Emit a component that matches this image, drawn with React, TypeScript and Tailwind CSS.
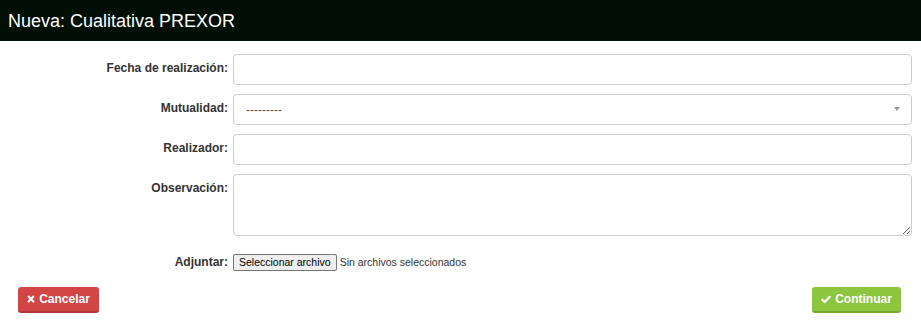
/**
 * Nueva Cualitativa PREXOR
 * Modal-like form for a new qualitative PREXOR record.
 */
import React from "react";

const labelCls =
  "text-right pt-[6px] pr-[5px] text-[12px] leading-[17px] font-bold text-[#333]";
const inputCls =
  "w-full h-[31px] border border-[#ccc] rounded-[4px] bg-white px-3 text-[12px] text-[#555] outline-none";

export default function App() {
  return (
    <div className="w-[921px] h-[327px] bg-white font-['Liberation_Sans',Arial,sans-serif]">
      <div className="h-[41px] bg-[#020f07] flex items-center px-[8px]">
        <h1 className="text-white text-[18px] leading-none">Nueva: Cualitativa PREXOR</h1>
      </div>

      <form className="pt-[13px] pr-[9px]">
        <div className="grid grid-cols-[233px_1fr] gap-y-[9px]">
          <label className={labelCls}>Fecha de realización:</label>
          <input type="text" className={inputCls} />

          <label className={labelCls}>Mutualidad:</label>
          <div className="relative">
            <div className={inputCls + " flex items-center"}>---------</div>
            <span className="absolute right-[12px] top-[13px] w-0 h-0 border-l-[3px] border-r-[3px] border-t-[4px] border-l-transparent border-r-transparent border-t-[#999]" />
          </div>

          <label className={labelCls}>Realizador:</label>
          <input type="text" className={inputCls} />

          <label className={labelCls}>Observación:</label>
          <textarea className="w-full h-[62px] border border-[#ccc] rounded-[4px] bg-white px-3 py-1 text-[12px] text-[#555] outline-none block" />
        </div>

        <div className="grid grid-cols-[233px_1fr] mt-[18px]">
          <label className="text-right pr-[5px] text-[12px] leading-[17px] font-bold text-[#333]">Adjuntar:</label>
          <div className="flex items-center gap-[3px] text-[10.5px]">
            <span className="h-[17px] px-[5px] flex items-center border border-[#767676] rounded-[2px] bg-[#efefef] text-black">
              Seleccionar archivo
            </span>
            <span className="text-[#333]">Sin archivos seleccionados</span>
          </div>
        </div>

        <div className="flex justify-between mt-[16px] pl-[18px] pr-[11px]">
          <button
            type="button"
            className="h-[26px] w-[81px] rounded-[3px] bg-[#d24545] border-b-2 border-[#b23636] text-white text-[12px] font-bold flex items-center justify-center gap-[4px]"
          >
            <svg width="8" height="8" viewBox="0 0 10 10">
              <path d="M2 2L8 8M8 2L2 8" stroke="white" strokeWidth="2.6" strokeLinecap="round" />
            </svg>
            Cancelar
          </button>
          <button
            type="button"
            className="h-[26px] w-[89px] rounded-[3px] bg-[#8cc63f] border-b-2 border-[#74a931] text-white text-[12px] font-bold flex items-center justify-center gap-[4px]"
          >
            <svg width="10" height="9" viewBox="0 0 12 10">
              <path d="M1.5 5.2L4.5 8L10.5 1.8" stroke="white" strokeWidth="2.6" fill="none" strokeLinecap="round" strokeLinejoin="round" />
            </svg>
            Continuar
          </button>
        </div>
      </form>
    </div>
  );
}
